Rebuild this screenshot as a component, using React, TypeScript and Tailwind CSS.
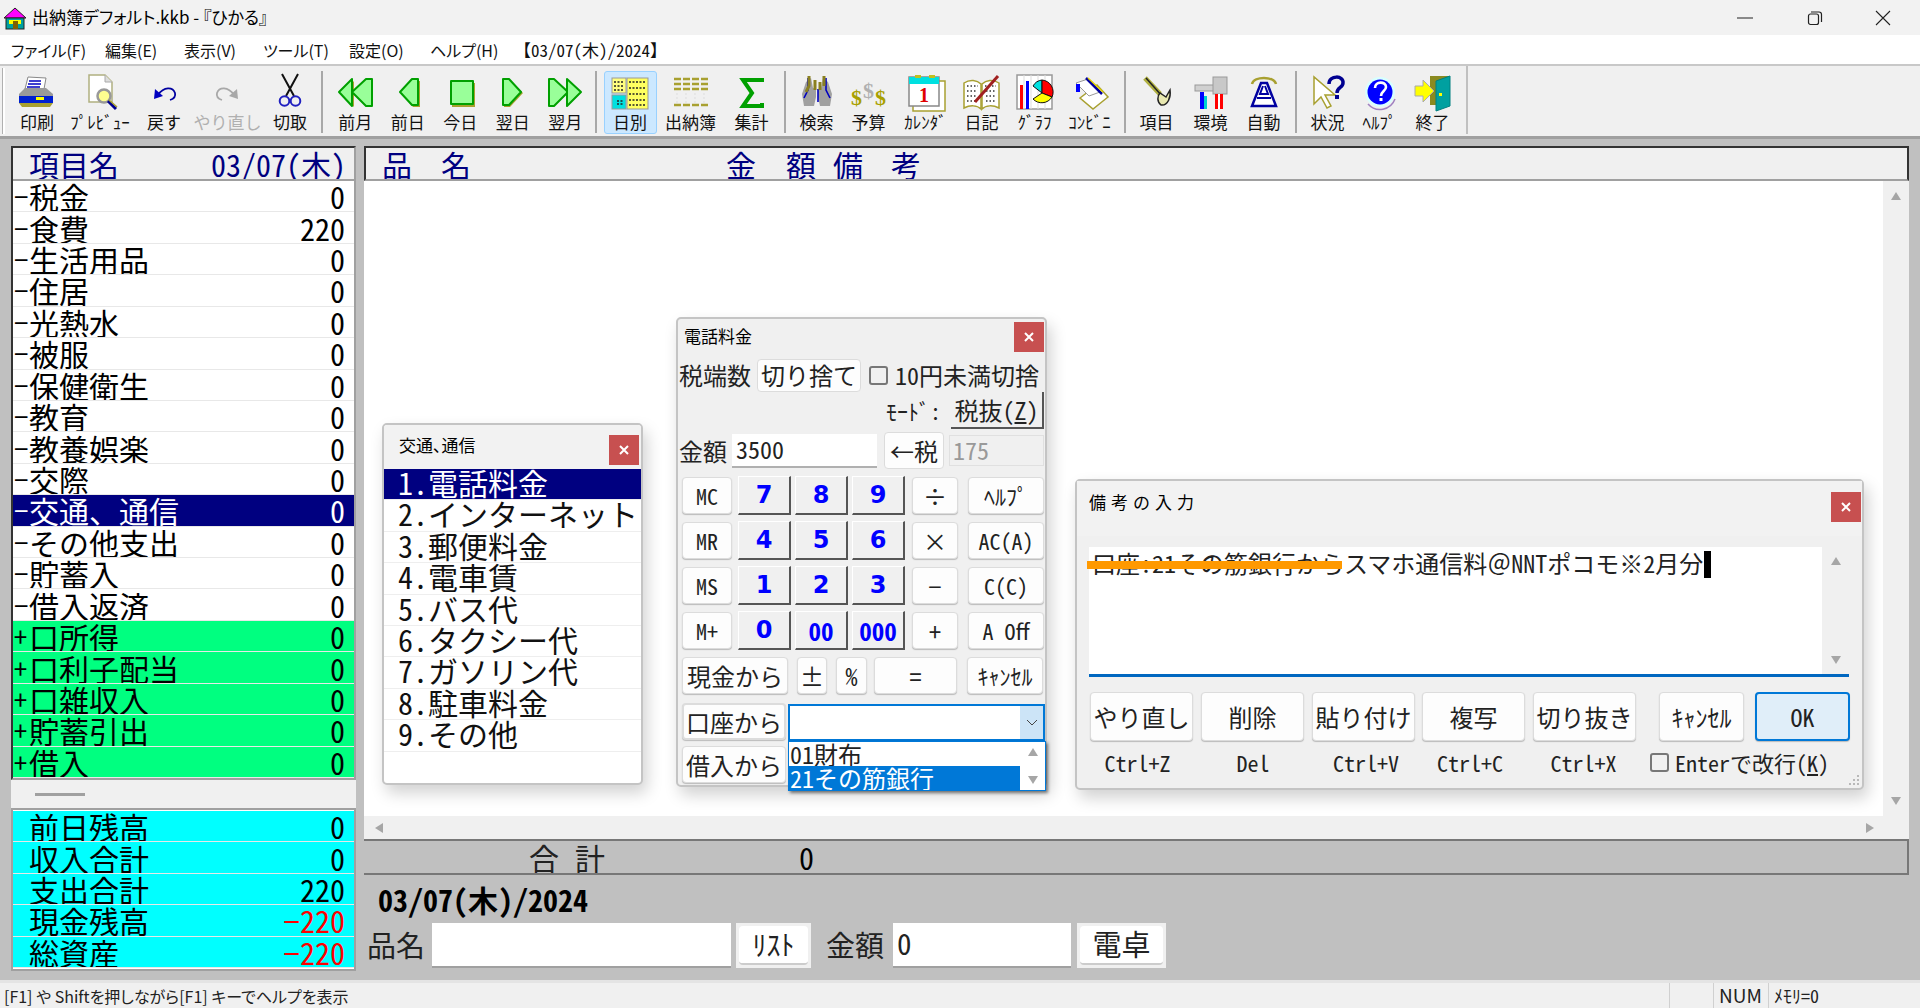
import { type ReactNode } from 'react';

const hw = "[font-feature-settings:'hwid']";

function Tool({ w, label, gray, active, children }: { w: string; label: string; gray?: boolean; active?: boolean; children: ReactNode }) {
  return (
    <div className={`${w} h-[63px] shrink-0 flex flex-col items-center rounded-[3px] border ${active ? 'bg-[#cce8ff] border-[#99d1ff]' : 'border-transparent'}`}>
      <svg width="40" height="40" viewBox="0 0 40 40" className="shrink-0">
        {children}
      </svg>
      <span className={`text-[17px] leading-[20px] whitespace-nowrap ${gray ? 'text-[#b0b0b0]' : 'text-[#111]'}`}>{label}</span>
    </div>
  );
}

function Sep({ className = '' }: { className?: string }) {
  return <div className={`w-[2px] h-[62px] bg-[#a8a8a8] shrink-0 ${className}`} />;
}

const arrowProps = { fill: '#99ff99', stroke: '#00a000', strokeWidth: 2, strokeLinejoin: 'round' as const };

function Row({ sign, name, value, kind }: { sign?: string; name: string; value: string; kind?: 'sel' | 'green' | 'cyan' | 'neg' }) {
  const bg = kind === 'sel' ? 'bg-[#000080] text-white' : kind === 'green' ? 'bg-[#00ff80] text-black' : kind === 'cyan' || kind === 'neg' ? 'bg-[#00ffff] text-black' : 'bg-white text-black';
  return (
    <div className={`h-[31.43px] flex items-center overflow-hidden border-b border-b-[#e8e8e8] text-[30px] leading-[30px] pr-[9px] ${bg}`}>
      <span className={`w-[16px] pl-[1px] text-[26px] ${hw}`}>{sign}</span>
      <span className="flex-1 whitespace-nowrap">{name}</span>
      <span className={`${hw} ${kind === 'neg' ? 'text-[#ff0000]' : ''}`}>{value}</span>
    </div>
  );
}

const items: [string, string, string, 'sel' | 'green' | undefined][] = [
  ['−', '税金', '0', undefined],
  ['−', '食費', '220', undefined],
  ['−', '生活用品', '0', undefined],
  ['−', '住居', '0', undefined],
  ['−', '光熱水', '0', undefined],
  ['−', '被服', '0', undefined],
  ['−', '保健衛生', '0', undefined],
  ['−', '教育', '0', undefined],
  ['−', '教養娯楽', '0', undefined],
  ['−', '交際', '0', undefined],
  ['−', '交通、通信', '0', 'sel'],
  ['−', 'その他支出', '0', undefined],
  ['−', '貯蓄入', '0', undefined],
  ['−', '借入返済', '0', undefined],
  ['+', '口所得', '0', 'green'],
  ['+', '口利子配当', '0', 'green'],
  ['+', '口雑収入', '0', 'green'],
  ['+', '貯蓄引出', '0', 'green'],
  ['+', '借入', '0', 'green'],
];

const subItems = [
  ['1.', '電話料金'],
  ['2.', 'インターネット'],
  ['3.', '郵便料金'],
  ['4.', '電車賃'],
  ['5.', 'バス代'],
  ['6.', 'タクシー代'],
  ['7.', 'ガソリン代'],
  ['8.', '駐車料金'],
  ['9.', 'その他'],
];

function CloseBtn({ className }: { className: string }) {
  return (
    <div className={`absolute w-[30px] h-[30px] bg-[#c75050] flex items-center justify-center ${className}`}>
      <svg width="10" height="10" viewBox="0 0 10 10"><path d="M1 1 9 9M9 1 1 9" stroke="#fff" strokeWidth="2" /></svg>
    </div>
  );
}

function Btn({ w, children, className = '' }: { w: string; children: ReactNode; className?: string }) {
  return (
    <div className={`${w} h-[37px] shrink-0 flex items-center justify-center bg-[#fdfdfd] border border-[#dcdcdc] rounded-[4px] shadow-[0_1px_1px_#bbb] text-[#222] whitespace-nowrap ${className}`}>
      {children}
    </div>
  );
}

function Key({ children }: { children: string }) {
  return (
    <div className={`w-[53px] h-[39px] shrink-0 flex items-center justify-center bg-[#f0f0f0] border-t border-l border-t-white border-l-white border-r-2 border-b-2 border-r-[#555] border-b-[#555] text-[#0000ff] font-bold leading-none ${children.length > 1 ? `text-[25px] ${hw}` : "text-[24px] font-['DejaVu_Sans']"}`}>
      {children}
    </div>
  );
}

function CalcRow({ a, keys, op, b }: { a: string; keys: string[]; op: string; b: string }) {
  return (
    <div className={`flex items-center h-[37px] mb-[8px] text-[22px] ${hw}`}>
      <Btn w="w-[50px]">{a}</Btn>
      <div className="ml-[6px] flex gap-[4px]">
        {keys.map((k) => (
          <Key key={k}>{k}</Key>
        ))}
      </div>
      <Btn w="w-[46px]" className="ml-[7px] text-[24px]">{op}</Btn>
      <Btn w="w-[76px]" className="ml-[10px]">{b}</Btn>
    </div>
  );
}

function MemoBtn({ w, children, className = '' }: { w: string; children: string; className?: string }) {
  return (
    <div className={`${w} h-[49px] shrink-0 flex items-center justify-center bg-[#fdfdfd] border border-[#dcdcdc] rounded-[4px] shadow-[0_1px_1px_#bbb] text-[24px] whitespace-nowrap ${className}`}>
      {children}
    </div>
  );
}

function Arrow({ up }: { up?: boolean }) {
  return (
    <svg width="12" height="10" viewBox="0 0 12 10">
      <path d={up ? 'M6 1 11 9H1Z' : 'M6 9 11 1H1Z'} fill="#a6a6a6" />
    </svg>
  );
}

export default function App() {
  return (
    <div className={`w-[1920px] h-[1008px] relative overflow-hidden flex flex-col bg-[#c0c0c0] text-black font-['Noto_Sans_CJK_JP','Liberation_Sans',sans-serif]`}>
      {/* title bar */}
      <div className="h-[35px] shrink-0 bg-[#f2f2f2] flex items-center pl-[3px] relative">
        <svg width="24" height="26" viewBox="0 0 24 26">
          <path d="M12 3 23 13H1Z" fill="#ff00ff" stroke="#222" strokeWidth="1" />
          <rect x="3" y="13" width="18" height="11" fill="#00a0a0" stroke="#222" />
          <rect x="6" y="15" width="12" height="4" fill="#ffff00" />
          <rect x="10" y="16" width="5" height="8" fill="#806000" />
        </svg>
        <span className="ml-[5px] text-[17px] leading-[30px] mb-[2px] [font-feature-settings:'palt'] whitespace-nowrap">出納簿デフォルト.kkb - 『ひかる』</span>
        <div className="absolute right-0 top-0 h-[35px] flex items-center">
          <div className="w-[70px] flex justify-center"><svg width="16" height="16" viewBox="0 0 16 16"><path d="M0 8H16" stroke="#222" /></svg></div>
          <div className="w-[69px] flex justify-center"><svg width="16" height="16" viewBox="0 0 16 16" fill="none" stroke="#222" strokeWidth="1.2"><rect x="1.5" y="4" width="10" height="10.5" rx="2" /><path d="M4 2h8a2.5 2.5 0 0 1 2.5 2.5V12" /></svg></div>
          <div className="w-[68px] flex justify-center mr-[3px]"><svg width="16" height="16" viewBox="0 0 16 16"><path d="M1 1 15 15M15 1 1 15" stroke="#222" strokeWidth="1.1" /></svg></div>
        </div>
      </div>

      {/* menu */}
      <div className="h-[29px] shrink-0 bg-white flex items-center pl-[11px] text-[16px] [font-feature-settings:'palt'] whitespace-nowrap text-[#111]">
        <span className="w-[94px]">ファイル(F)</span>
        <span className="w-[79px]">編集(E)</span>
        <span className="w-[79px]">表示(V)</span>
        <span className="w-[86px]">ツール(T)</span>
        <span className="w-[81px]">設定(O)</span>
        <span className="w-[84px]">ヘルプ(H)</span>
        <span className={`text-[17px] ${hw}`}>【03/07(木)/2024】</span>
      </div>

      {/* toolbar */}
      <div className="h-[75px] shrink-0 bg-[#f0f0f0] border-t-2 border-t-[#c8c8c8] border-b-[3px] border-b-[#a0a0a0] flex items-start pt-[5px] pl-[2px]">
        <div className="w-[3px] h-[66px] -mt-[3px] bg-white border-l border-l-[#b0b0b0] shrink-0 mr-[1px]" />
        <Tool w="w-[62px]" label="印刷">
          <path d="M11 5 29 6 27 17H8Z" fill="#fff" stroke="#888" />
          <path d="M12 9H24M11 12H24M10 15H23" stroke="#0000c0" strokeWidth="1.4" />
          <path d="M2 22 8 16H29L36 22V30H2Z" fill="#9a9a9a" />
          <path d="M2 24H36V31H2Z" fill="#0020d0" />
          <rect x="19" y="25" width="8" height="3" fill="#ffff00" />
          <path d="M2 31H36L33 35H5Z" fill="#a8a030" />
        </Tool>
        <Tool w="w-[64px]" label="ﾌﾟﾚﾋﾞｭｰ">
          <path d="M9 3H25L32 10V30H9Z" fill="#fff" stroke="#b0b080" strokeWidth="1.5" />
          <path d="M25 3V10H32" fill="#ddd" stroke="#aaa" />
          <circle cx="24" cy="24" r="6.5" fill="#ffff90" stroke="#999" strokeWidth="2.5" />
          <path d="M28 29 36 37" stroke="#000090" strokeWidth="3" />
          <path d="M29 28 37 35" stroke="#a8a030" strokeWidth="1.5" />
        </Tool>
        <Tool w="w-[64px]" label="戻す">
          <path d="M14 23C20 14 29 15 31 21 32 25 29 27 26 28" fill="none" stroke="#0000a0" strokeWidth="1.8" />
          <path d="M11 17 19 24 10 27Z" fill="#0000c0" />
        </Tool>
        <Tool w="w-[63px]" label="やり直し" gray>
          <path d="M26 23C20 14 11 15 9 21 8 25 11 27 14 28" fill="none" stroke="#a8a8a8" strokeWidth="1.8" />
          <path d="M29 17 21 24 30 27Z" fill="#a8a8a8" />
        </Tool>
        <Tool w="w-[62px]" label="切取">
          <path d="M12 2 24 24M28 2 16 24" stroke="#111" strokeWidth="2" />
          <circle cx="14.5" cy="29" r="4.8" fill="none" stroke="#2020c0" strokeWidth="2" />
          <circle cx="25.5" cy="29" r="4.8" fill="none" stroke="#2020c0" strokeWidth="2" />
        </Tool>
        <Sep className="mr-[6px]" />
        <Tool w="w-[52.5px]" label="前月">
          <path d="M6 22 19 9V35Z" fill="#a8a030" />
          <path d="M4 20 17 7V34Z" {...arrowProps} />
          <path d="M17 20 31 7H37V34H31Z" {...arrowProps} />
        </Tool>
        <Tool w="w-[52.5px]" label="前日">
          <path d="M13 21 25 9H32V35H25Z" fill="#a8a030" />
          <path d="M12 20 24 7H30V33H24Z" {...arrowProps} />
        </Tool>
        <Tool w="w-[52.5px]" label="今日">
          <rect x="12" y="11" width="23" height="24" fill="#a8a030" />
          <rect x="11" y="9" width="22" height="23" {...arrowProps} />
        </Tool>
        <Tool w="w-[52.5px]" label="翌日">
          <path d="M11 9H17L30 21 17 35H11Z" fill="#a8a030" />
          <path d="M10 7H16L28 20 16 33H10Z" {...arrowProps} />
        </Tool>
        <Tool w="w-[52.5px]" label="翌月">
          <path d="M4 7H9L23 20 9 34H4Z" {...arrowProps} />
          <path d="M22 7 36 20 22 34Z" {...arrowProps} />
        </Tool>
        <Sep className="ml-[3px] mr-[7px]" />
        <Tool w="w-[53px]" label="日別" active>
          <rect x="2" y="6" width="14" height="15" fill="#ffff80" stroke="#999" />
          <rect x="2" y="23" width="14" height="14" fill="#00e0e0" stroke="#999" />
          <rect x="17" y="6" width="21" height="31" fill="#ffff60" stroke="#999" />
          <path d="M4 10H14M4 14H14M4 18H14M7 29H13M7 32H13M19 10H36M19 16H36M19 22H36M19 28H36M19 33H36" stroke="#222" strokeWidth="1.5" strokeDasharray="2 1.5" />
        </Tool>
        <Tool w="w-[68px]" label="出納簿">
          <path d="M3 7H37M3 12H37M3 17H37M3 33H37" stroke="#a8a030" strokeWidth="2.5" strokeDasharray="7 2" />
          <path d="M6 21V31M15 21V31M24 21V31M33 21V31" stroke="#ddd" strokeWidth="1" strokeDasharray="2 2" />
        </Tool>
        <Tool w="w-[54px]" label="集計">
          <path d="M30 10V8H11L20 21 11 34H30V31" fill="none" stroke="#00a000" strokeWidth="4" />
        </Tool>
        <Sep className="ml-[5px] mr-[2px]" />
        <Tool w="w-[58px]" label="検索">
          <path d="M9 10 14 6 16 16 19 17V25L17 34H7L5 22Z" fill="#a0a0a0" />
          <path d="M31 10 26 6 24 16 21 17V25L23 34H33L35 22Z" fill="#a0a0a0" />
          <path d="M11 6V18L7 26M21 17V30M29 6V18L33 26" fill="none" stroke="#0000c0" strokeWidth="1.6" />
          <path d="M12 4V14L9 20M18 8V18M27 4V14M23 10V18" fill="none" stroke="#8a8020" strokeWidth="3" />
        </Tool>
        <Tool w="w-[46px]" label="予算">
          <text x="2" y="33" fontSize="22" fontWeight="700" fill="#a8a000" fontFamily="Liberation Serif">$</text>
          <text x="14" y="26" fontSize="22" fontWeight="700" fill="#b0b0b0" fontFamily="Liberation Serif">$</text>
          <text x="26" y="33" fontSize="22" fontWeight="700" fill="#a8a000" fontFamily="Liberation Serif">$</text>
        </Tool>
        <Tool w="w-[68px]" label="ｶﾚﾝﾀﾞ">
          <rect x="7" y="9" width="32" height="30" fill="#fff" stroke="#a8a030" strokeWidth="1.5" />
          <rect x="3" y="5" width="30" height="29" fill="#fff" stroke="#888" strokeWidth="1.5" />
          <rect x="3" y="5" width="30" height="7" fill="#00e0e0" />
          <rect x="9" y="3" width="6" height="3" fill="#c0c020" />
          <rect x="23" y="3" width="6" height="3" fill="#c0c020" />
          <text x="13" y="30" fontSize="20" fontWeight="700" fill="#e00000" fontFamily="Liberation Serif">1</text>
        </Tool>
        <Tool w="w-[44px]" label="日記">
          <path d="M2 11C8 7 15 8 19 12V37C15 33 8 33 2 36Z" fill="#fff" stroke="#a8a030" strokeWidth="1.5" />
          <path d="M37 11C31 7 24 8 20 12V37C24 33 31 33 37 36Z" fill="#fff" stroke="#a8a030" strokeWidth="1.5" />
          <path d="M5 14H16M5 19H15M5 24H15M5 29H15M23 14H34M24 19H34M24 24H34M24 29H34" stroke="#333" strokeWidth="1.5" strokeDasharray="1.5 2" />
          <path d="M13 30 36 4" stroke="#a02020" strokeWidth="3" />
        </Tool>
        <Tool w="w-[62px]" label="ｸﾞﾗﾌ">
          <rect x="2" y="3" width="35" height="34" fill="#fff" stroke="#999" strokeWidth="1.5" />
          <path d="M9 3V37M16 3V37M23 3V37M30 3V37" stroke="#ddd" />
          <rect x="5" y="13" width="3" height="24" fill="#ff0000" />
          <rect x="11" y="9" width="3" height="28" fill="#0000ff" />
          <path d="M27 21 18 14 A12 12 0 0 1 27 8Z" fill="#00e0e0" stroke="#111" />
          <path d="M27 21V8A12 12 0 0 1 37 25Z" fill="#ff0000" stroke="#111" />
          <path d="M27 21 37 25A12 12 0 0 1 18 27Z" fill="#ffff00" stroke="#111" />
        </Tool>
        <Tool w="w-[48px]" label="ｺﾝﾋﾞﾆ">
          <path d="M10 26 27 13 38 25 23 37Z" fill="#fff" stroke="#a8a030" strokeWidth="1.5" />
          <path d="M6 11 18 7 30 20 19 24Z" fill="#fff" stroke="#999" />
          <rect x="6" y="12" width="4" height="8" fill="#0000ff" />
          <path d="M16 6 32 22" stroke="#0000a0" strokeWidth="2.5" />
          <path d="M18 6 33 20" stroke="#e0d000" strokeWidth="1.5" />
        </Tool>
        <Sep className="ml-[10px]" />
        <Tool w="w-[62px]" label="項目">
          <path d="M8 6 23 22" stroke="#b0b040" strokeWidth="5" />
          <path d="M9 6 25 24" stroke="#222" strokeWidth="1.5" fill="none" />
          <path d="M33 18C34 25 31 34 24 33 20 30 20 24 23 21L29 25Z" fill="#e8e8b0" stroke="#222" strokeWidth="1.5" />
        </Tool>
        <Tool w="w-[46px]" label="環境">
          <rect x="4" y="13" width="24" height="6" fill="#d0d0d0" stroke="#999" />
          <rect x="22" y="5" width="14" height="17" fill="#c8c8c8" stroke="#999" />
          <rect x="9" y="20" width="4" height="17" fill="#0000ff" />
          <rect x="13" y="24" width="3" height="13" fill="#00d0d0" />
          <rect x="24" y="22" width="8" height="15" fill="#ff0000" />
          <rect x="27" y="22" width="2" height="15" fill="#ffffff" />
        </Tool>
        <Tool w="w-[60px]" label="自動">
          <path d="M8 12C10 4 30 4 32 12" fill="none" stroke="#a8a030" strokeWidth="2.5" />
          <path d="M17 11H23L32 34H8Z" fill="#fff" stroke="#0000a0" strokeWidth="2.5" />
          <path d="M13 26H27M19 14 16 22H24L21 14" fill="none" stroke="#0000a0" strokeWidth="2" />
        </Tool>
        <Sep className="ml-[1px]" />
        <Tool w="w-[62px]" label="状況">
          <path d="M6 5V32L13 25 19 36 23 34 17 23H27Z" fill="#fff" stroke="#a8a030" strokeWidth="1.5" />
          <path d="M21 12C21 3 36 3 35 11 35 16 29 15 29 21" fill="none" stroke="#000090" strokeWidth="3.5" />
          <rect x="27" y="23" width="4" height="4" fill="#000090" />
        </Tool>
        <Tool w="w-[42px]" label="ﾍﾙﾌﾟ">
          <circle cx="20" cy="20" r="15" fill="#d8ffff" />
          <path d="M8 32A16 16 0 0 0 35 27" fill="none" stroke="#a080c0" strokeWidth="1.5" />
          <circle cx="20" cy="20" r="12.5" fill="#0000ff" />
          <path d="M15 16C15 9 26 9 26 15 26 19 21 19 21 24" fill="none" stroke="#fff" strokeWidth="2.6" />
          <rect x="19.5" y="26" width="3" height="3" fill="#fff" />
        </Tool>
        <Tool w="w-[64px]" label="終了">
          <rect x="17" y="4" width="19" height="29" fill="#8a8a20" />
          <path d="M23 9 37 4V34L23 39Z" fill="#00a0a0" stroke="#008080" />
          <rect x="26" y="21" width="3" height="3" fill="#ffff00" />
          <path d="M2 14H10V8L21 19 10 30V24H2Z" fill="#ffff00" stroke="#aaa" />
        </Tool>
        <div className="ml-[1px] w-[2px] h-[68px] -mt-[5px] bg-[#c0c0c0] shrink-0" />
      </div>

      {/* main */}
      <div className="flex-1 flex min-h-0 pl-[11px] pr-[11px] pt-[7px] gap-[8px] bg-[#c0c0c0]">
        <div className="w-[345px] shrink-0 flex flex-col">
          <div className="border-2 border-[#a0a0a0] border-t-[#333] border-l-[#333]">
            <div className="h-[33px] bg-[#f0f0f0] flex items-start justify-between overflow-hidden px-[16px] pr-[8px] text-[#000080] text-[30px] leading-[33px] border-b-2 border-b-[#a0a0a0]">
              <span>項目名</span>
              <span className={hw}>03/07(木)</span>
            </div>
            {items.map(([s, n, v, k]) => (
              <Row key={n} sign={s} name={n} value={v} kind={k} />
            ))}
          </div>
          <div className="h-[28px] bg-[#f0f0f0] flex items-center pl-[24px]">
            <div className="w-[50px] h-[3px] bg-[#a0a0a0]" />
          </div>
          <div className="border-2 border-[#a0a0a0] bg-white py-[1px]">
            <Row name="前日残高" value="0" kind="cyan" />
            <Row name="収入合計" value="0" kind="cyan" />
            <Row name="支出合計" value="220" kind="cyan" />
            <Row name="現金残高" value="−220" kind="neg" />
            <Row name="総資産" value="−220" kind="neg" />
          </div>
        </div>

        <div className="flex-1 min-w-0 flex flex-col">
          <div className="h-[35px] shrink-0 border-t-2 border-l-2 border-r-2 border-t-[#333] border-l-[#333] border-r-[#333] border-b-2 border-b-[#a0a0a0] bg-[#f0f0f0] overflow-hidden text-[#000080] text-[30px] leading-[33px] flex pl-[16px] whitespace-nowrap">
            <span className="w-[344px] tracking-[29px]">品名</span>
            <span className="w-[60px]">金</span>
            <span className="w-[47px]">額</span>
            <span className="w-[58px]">備</span>
            <span>考</span>
          </div>
          <div className="h-[660px] shrink-0 flex flex-col bg-[#f0f0f0]">
            <div className="flex-1 flex min-h-0">
              <div className="flex-1 bg-white" />
              <div className="w-[26px] flex flex-col items-center justify-between py-[10px]">
                <Arrow up />
                <Arrow />
              </div>
            </div>
            <div className="h-[25px] flex items-center justify-between px-[10px] pr-[34px] border-b-2 border-b-[#777]">
              <svg width="10" height="12" viewBox="0 0 10 12"><path d="M1 6 9 1V11Z" fill="#a6a6a6" /></svg>
              <svg width="10" height="12" viewBox="0 0 10 12"><path d="M9 6 1 1V11Z" fill="#a6a6a6" /></svg>
            </div>
          </div>
          <div className="h-[34px] shrink-0 border-b-2 border-b-[#777] border-r-2 border-r-[#777] flex items-center overflow-hidden text-[30px] leading-[34px]">
            <span className="ml-[165px] w-[270px] tracking-[16px] text-[#222]">合計</span>
            <span className={hw}>0</span>
          </div>
          <div className={`pl-[14px] mt-[3px] h-[42px] text-[30px] font-bold leading-[42px] ${hw}`}>03/07(木)/2024</div>
          <div className="flex items-center h-[46px] pl-[3px] mt-[2px] text-[29px] text-[#222]">
            <span className="w-[65px]">品名</span>
            <div className="w-[299px] h-[45px] bg-white border-b-2 border-b-[#a0a0a0]" />
            <div className="ml-[5px] w-[75px] h-[45px] p-[3px] bg-[#f0f0f0] flex">
              <div className={`flex-1 bg-white rounded-[4px] border-b-2 border-b-[#ccc] flex items-center justify-center text-[28px] ${hw}`}>ﾘｽﾄ</div>
            </div>
            <span className="ml-[15px] w-[67px]">金額</span>
            <div className={`w-[178px] h-[45px] bg-white border-b-2 border-b-[#a0a0a0] pl-[4px] leading-[38px] ${hw}`}>0</div>
            <div className="ml-[6px] w-[89px] h-[45px] p-[3px] bg-[#f0f0f0] flex">
              <div className="flex-1 bg-white rounded-[4px] border-b-2 border-b-[#ccc] flex items-center justify-center">電卓</div>
            </div>
          </div>
        </div>
      </div>

      {/* status bar */}
      <div className="h-[28px] shrink-0 bg-[#f0f0f0] border-t-[3px] border-t-[#e4e4e4] flex items-center text-[16px] text-[#222] whitespace-nowrap">
        <span className="flex-1 pl-[4px] [font-feature-settings:'palt']">[F1] や Shiftを押しながら[F1] キーでヘルプを表示</span>
        <div className="w-[44px] h-full border-l border-l-[#d0d0d0]" />
        <div className="w-[55px] h-full border-l border-l-[#d0d0d0] pl-[5px] text-[19px] leading-[24px]">NUM</div>
        <div className={`w-[152px] h-full border-l border-l-[#d0d0d0] pl-[5px] text-[18px] leading-[24px] ${hw}`}>ﾒﾓﾘ=0</div>
      </div>

      {/* sub item window */}
      <div className="absolute left-[382px] top-[423px] w-[261px] h-[362px] bg-white border-2 border-[#c4c4c4] rounded-[5px] overflow-hidden shadow-[4px_8px_16px_rgba(0,0,0,0.18)]">
        <div className="h-[44px] bg-[#f2f2f2] pl-[15px] text-[17px] leading-[40px] [font-feature-settings:'palt']">交通、通信</div>
        <CloseBtn className="right-[2px] top-[10px]" />
        {subItems.map(([n, s], i) => (
          <div key={s} className={`h-[31.4px] flex pl-[14px] text-[30px] leading-[27px] whitespace-nowrap overflow-hidden border-b border-b-[#eee] ${i === 0 ? 'bg-[#000080] text-white' : 'text-[#111]'}`}>
            <span className={`w-[30px] shrink-0 ${hw}`}>{n}</span>
            <span>{s}</span>
          </div>
        ))}
      </div>

      {/* calculator window */}
      <div className="absolute left-[676px] top-[317px] w-[371px] h-[470px] bg-[#f0f0f0] border-2 border-[#c4c4c4] rounded-[5px] shadow-[4px_8px_16px_rgba(0,0,0,0.18)] text-[#222]">
        <div className="h-[39px] pl-[6px] text-[17px] leading-[34px] text-black">電話料金</div>
        <CloseBtn className="right-[1px] top-[3px]" />
        <div className={`flex items-center h-[34px] pl-[1px] text-[24px] ${hw} whitespace-nowrap`}>
          <span className="w-[78px] text-[24px]">税端数</span>
          <div className="w-[104px] h-[33px] bg-[#fdfdfd] border border-[#dcdcdc] rounded-[4px] flex items-center justify-center">切り捨て</div>
          <div className="ml-[8px] w-[19px] h-[19px] border-2 border-[#777] rounded-[3px]" />
          <span className="ml-[7px]">10円未満切捨</span>
        </div>
        <div className={`flex items-center justify-end h-[37px] text-[24px] ${hw}`}>
          <span className="mr-[10px] text-[22px]">ﾓｰﾄﾞ:</span>
          <div className="w-[93px] h-[37px] mr-[1px] flex items-center justify-center bg-[#f0f0f0] border-r-2 border-b-2 border-r-[#555] border-b-[#555]">
            税抜(<span className="underline">Z</span>)
          </div>
        </div>
        <div className={`flex items-center h-[37px] mt-[3px] pl-[1px] text-[24px] ${hw}`}>
          <span className="w-[53px]">金額</span>
          <div className="w-[145px] h-[34px] bg-white border-b-2 border-b-[#b0b0b0] pl-[4px] leading-[30px]">3500</div>
          <div className="ml-[7px] w-[60px] h-[37px] bg-[#fdfdfd] border border-[#dcdcdc] rounded-[4px] flex items-center justify-center">←税</div>
          <div className="ml-[5px] w-[95px] h-[31px] bg-[#f0f0f0] border border-[#e0e0e0] pl-[3px] leading-[27px] text-[#999]">175</div>
        </div>
        <div className="mt-[8px] pl-[4px]">
          <CalcRow a="MC" keys={['7', '8', '9']} op="÷" b="ﾍﾙﾌﾟ" />
          <CalcRow a="MR" keys={['4', '5', '6']} op="×" b="AC(A)" />
          <CalcRow a="MS" keys={['1', '2', '3']} op="−" b="C(C)" />
          <CalcRow a="M+" keys={['0', '00', '000']} op="+" b="A Off" />
          <div className={`flex items-center h-[37px] text-[24px] ${hw}`}>
            <Btn w="w-[106px]">現金から</Btn>
            <Btn w="w-[30px]" className="ml-[9px]">±</Btn>
            <Btn w="w-[31px]" className="ml-[9px]">%</Btn>
            <Btn w="w-[83px]" className="ml-[7px]">=</Btn>
            <Btn w="w-[76px]" className="ml-[10px] text-[22px]">ｷｬﾝｾﾙ</Btn>
          </div>
          <div className="mt-[7px] flex items-start text-[24px]">
            <div className="flex flex-col">
              <Btn w="w-[104px]" className="h-[35px] mt-[2px] border-2 border-[#0078d7]">口座から</Btn>
              <Btn w="w-[104px]" className="h-[33px] mt-[6px]">借入から</Btn>
            </div>
          </div>
        </div>
        {/* combo box */}
        <div className="absolute left-[110px] top-[385px] w-[257px] h-[37px] bg-white border-2 border-[#0078d7] flex justify-end">
          <div className="w-[23px] bg-[#cce4f7] flex items-center justify-center">
            <svg width="12" height="8" viewBox="0 0 12 8"><path d="M1 1 6 6 11 1" fill="none" stroke="#444" /></svg>
          </div>
        </div>
        <div className={`absolute left-[110px] top-[422px] w-[258px] h-[50px] bg-white border border-[#0078d7] shadow-[2px_2px_3px_rgba(0,0,0,0.5)] text-[24px] leading-[24px] flex ${hw}`}>
          <div className="w-[231px]">
            <div className="h-[24px] pl-[1px] overflow-hidden">01財布</div>
            <div className="h-[24px] pl-[1px] overflow-hidden bg-[#0078d7] text-white">21その筋銀行</div>
          </div>
          <div className="flex-1 flex flex-col items-center justify-between py-[5px]">
            <Arrow up />
            <Arrow />
          </div>
        </div>
      </div>

      {/* memo window */}
      <div className="absolute left-[1075px] top-[479px] w-[789px] h-[311px] bg-[#f0f0f0] border-2 border-[#c4c4c4] rounded-[5px] shadow-[4px_8px_16px_rgba(0,0,0,0.18)] text-[#222]">
        <div className="h-[55px] bg-[#f2f2f2] pl-[12px] pt-[5px] text-[17px] leading-[32px] tracking-[5px] text-black">備考の入力</div>
        <CloseBtn className="right-[1px] top-[11px]" />
        <div className="ml-[12px] mr-[13px] mt-[11px] h-[130px] bg-white border-b-[3px] border-b-[#0067c0] flex">
          <div className="flex-1 relative pl-[3px] text-[24px] leading-[32px] whitespace-nowrap">
            <span className={hw}>口座:21その筋銀行からスマホ通信料</span>
            <span>＠</span>
            <span className={hw}>NNTポコモ※2月分</span>
            <span className="inline-block w-[7px] h-[27px] bg-black align-[-5px] ml-[1px]" />
            <div className="absolute left-[-2px] top-[14px] w-[255px] h-[8px] bg-[#ff9900]" />
          </div>
          <div className="w-[27px] bg-[#f0f0f0] flex flex-col items-center justify-between py-[9px]">
            <Arrow up />
            <Arrow />
          </div>
        </div>
        <div className="flex pl-[13px] mt-[15px]">
          <MemoBtn w="w-[103px]">やり直し</MemoBtn>
          <MemoBtn w="w-[103px]" className="ml-[8px]">削除</MemoBtn>
          <MemoBtn w="w-[103px]" className="ml-[8px]">貼り付け</MemoBtn>
          <MemoBtn w="w-[103px]" className="ml-[7px]">複写</MemoBtn>
          <MemoBtn w="w-[103px]" className="ml-[8px]">切り抜き</MemoBtn>
          <MemoBtn w="w-[85px]" className={`ml-[23px] ${hw}`}>ｷｬﾝｾﾙ</MemoBtn>
          <MemoBtn w="w-[95px]" className={`ml-[11px] !bg-[#e0eef9] !border-2 !border-[#0078d7] ${hw}`}>OK</MemoBtn>
        </div>
        <div className={`flex items-center mt-[6px] pl-[8px] h-[30px] text-[22px] whitespace-nowrap ${hw}`}>
          <span className="w-[105px] text-center">Ctrl+Z</span>
          <span className="w-[126px] text-center">Del</span>
          <span className="w-[100px] text-center">Ctrl+V</span>
          <span className="w-[108px] text-center">Ctrl+C</span>
          <span className="w-[119px] text-center">Ctrl+X</span>
          <div className="ml-[7px] w-[19px] h-[19px] border-2 border-[#777] rounded-[3px] shrink-0" />
          <span className="ml-[6px]">Enterで改行(<span className="underline">K</span>)</span>
        </div>
        <svg width="12" height="12" viewBox="0 0 12 12" className="absolute right-[2px] bottom-[2px]">
          <path d="M9 1H11V3H9ZM5 5H7V7H5ZM9 5H11V7H9ZM1 9H3V11H1ZM5 9H7V11H5ZM9 9H11V11H9Z" fill="#b8b8b8" />
        </svg>
      </div>
    </div>
  );
}
